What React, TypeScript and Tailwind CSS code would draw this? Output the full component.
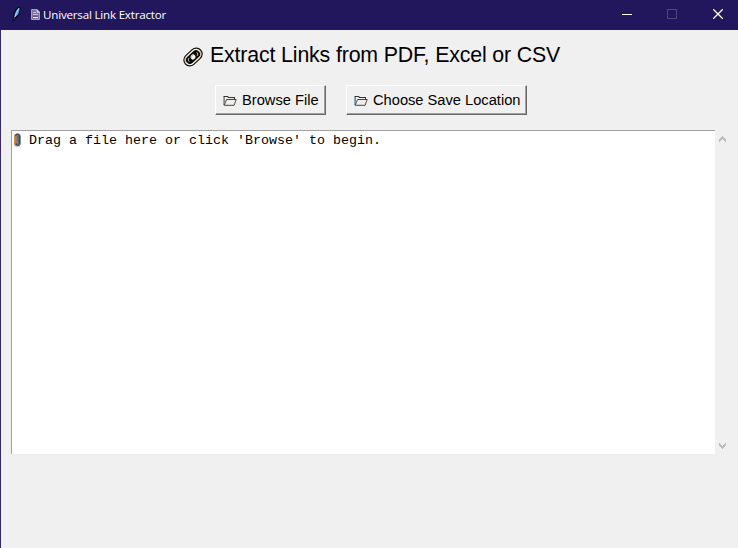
function FeatherIcon() {
  return (
    <svg className="h-4 w-3" viewBox="0 0 12 16" fill="none">
      <path d="M2 14.5 2.2 8 5 2.6 8.2.6 9.6 1.4 9.4 5 8 9.5 4.8 12.6Z" fill="#070914" />
      <path d="M3.8 11.2 3.6 8 5.6 4 8.5 1.5 8.4 4.8 7 8.8Z" fill="#4d9ce0" />
      <path d="M2.6 13.5 4.8 8.5 7.8 2.4" stroke="#c5e2f5" strokeWidth=".9" />
      <path d="M1.8 15.8 3.4 11.2" stroke="#05060c" strokeWidth="1.1" />
    </svg>
  );
}

function PageIcon() {
  return (
    <svg className="h-[11px] w-[9px]" viewBox="0 0 9 11" fill="none">
      <path d="M.5.5h5.5l2.5 2.5v7.5h-8Z" fill="#7d739d" stroke="#a79fbd" />
      <path d="M6 .5v2.7h2.5" fill="#d6d2e6" stroke="#d6d2e6" strokeWidth=".8" />
      <path d="M2 3.5h3M2 5.5h5" stroke="#c4bdd6" />
      <path d="M2 8.5h5" stroke="#f0edf8" />
      <path d="M2 7.2h5" stroke="#4b3d82" strokeWidth=".8" />
    </svg>
  );
}

function LinkIcon() {
  return (
    <svg className="h-5 w-5" viewBox="0 0 20 20" fill="none">
      <g transform="rotate(-43 10 10)">
        <rect x="-.3" y="4.1" width="20.6" height="11.8" rx="5.9" fill="#f6eee2" stroke="#111" strokeWidth="1.2" />
        <rect x="1.8" y="6" width="16.4" height="8" rx="4" fill="#0a0a0a" />
        <path d="M4 10.8c0-1.8 1-2.5 2.3-2.7M16 9.2c0 1.8-1 2.5-2.3 2.7" stroke="#d6e8f5" strokeWidth=".9" />
        <circle cx="10" cy="10" r="3" fill="#f7f5ed" stroke="#111" strokeWidth="1" />
        <path d="M8.3 9.5c.5-1.2 1.8-1.4 2.8-.8" stroke="#7baed6" strokeWidth=".7" />
        <path d="M1.2 9.2C1.5 6.7 3.2 5.3 5.6 5.3M18.8 10.8c-.3 2.5-2 3.9-4.4 3.9" stroke="#d79a52" strokeWidth=".6" />
      </g>
    </svg>
  );
}

function FolderIcon() {
  return (
    <svg className="h-[11px] w-[14px] shrink-0" viewBox="0 0 14 11" fill="none">
      <path d="M1 10V1.5h3.5L5.5 2.5h6v2" stroke="#373432" strokeWidth="1.1" />
      <path d="M1.3 10.3 3.5 4.5h9.7l-2.1 5.8Z" fill="#f0f0f0" stroke="#474341" />
      <path d="M.4 2v7.5" stroke="#89bce4" strokeWidth=".8" />
      <path d="m3 6-1.2 3M12.5 5.5l-1.6 4" stroke="#c99a74" strokeWidth=".5" />
    </svg>
  );
}

function ClipIcon() {
  return (
    <svg className="h-[14px] w-[7px]" viewBox="0 0 7 14" fill="none">
      <rect x=".3" y=".4" width="6.2" height="13.2" rx="2.4" fill="#8d8480" />
      <path d="M.6 2.5v9" stroke="#dc9341" strokeWidth="1.2" />
      <path d="M6.3 2.5v9" stroke="#6689ad" strokeWidth="1.1" />
      <path d="M1.8 3C1.8.4 5.2.4 5.2 3v7.2c0 2.8-3 2.8-3 .2" stroke="#302b2b" />
      <path d="M3.5 3v6" stroke="#806c60" />
    </svg>
  );
}

function ScrollArrow({ down = false }: { down?: boolean }) {
  return (
    <svg className={down ? "h-[6px] w-[7px] rotate-180" : "h-[6px] w-[7px]"} viewBox="0 0 7 6" fill="#bcbcbc" shapeRendering="crispEdges">
      <path d="M3 0h1v1h1v1h1v1h1v3H6V5H5V4H4V3H3v1H2v1H1v1H0V3h1V2h1V1h1Z" />
    </svg>
  );
}

function FileButton({ label, className }: { label: string; className: string }) {
  return (
    <button className={`${className} flex h-[30px] items-center border border-t-white border-r-[#696969] border-b-[#696969] border-l-white bg-[#f0f0f0] pl-[7px] text-black shadow-[inset_-1px_-1px_#a0a0a0]`}>
      <span className="mt-px flex"><FolderIcon /></span>
      <span className="ml-[5px] whitespace-nowrap text-[14.67px] leading-[20px]">{label}</span>
    </button>
  );
}

export default function App() {
  return (
    <div className="flex h-[548px] w-[738px] flex-col overflow-hidden bg-[#f0f0f0] font-['Liberation_Sans',Arial,sans-serif] text-black">
      <header className="flex h-[30px] shrink-0 bg-[#22165d] text-white">
        <div className="flex items-start pl-[11px] pt-[6px]">
          <FeatherIcon />
          <span className="ml-[8px] mt-[3px]"><PageIcon /></span>
          <span className="ml-[3px] whitespace-nowrap font-['Open_Sans',sans-serif] text-[11.6px] leading-[17px] tracking-[-0.2px]">Universal Link Extractor</span>
        </div>
        <div className="ml-auto flex">
          <span className="flex w-[46px] justify-center pt-[14px]"><svg className="h-px w-[10px]" viewBox="0 0 10 1"><path d="M0 0h10v1H0Z" fill="white" /></svg></span>
          <span className="flex w-[44px] justify-center pt-[9px]"><span className="h-[10px] w-[10px] border border-[#51477f]" /></span>
          <span className="flex w-[44px] justify-center pl-[4px] pt-[9px]"><svg className="h-[10px] w-[10px]" viewBox="0 0 10 10"><path d="m.3.3 9.4 9.4m0-9.4L.3 9.7" stroke="white" strokeWidth="1.3" /></svg></span>
        </div>
      </header>
      <main className="flex min-h-0 flex-1 flex-col border-l border-[#37296f]">
        <div className="flex h-[55px] shrink-0 pl-[182px] pt-[13px]">
          <span className="mt-[4px]"><LinkIcon /></span>
          <h1 className="ml-[7px] whitespace-nowrap text-[21.33px] leading-[25px] tracking-[-0.15px]">Extract Links from PDF, Excel or CSV</h1>
        </div>
        <div className="flex h-[45px] shrink-0 gap-[20px] pl-[214px]">
          <FileButton label="Browse File" className="w-[111px]" />
          <FileButton label="Choose Save Location" className="w-[181px]" />
        </div>
        <div className="flex h-[324px] pl-[10px]">
          <div className="flex w-[704px] items-start border-t border-l border-[#a0a0a0] bg-white pl-[2px] pt-[2px]">
            <ClipIcon />
            <pre className="ml-[8px] font-['Liberation_Mono','Courier_New',monospace] text-[13.33px] leading-[15px]">Drag a file here or click 'Browse' to begin.</pre>
          </div>
          <div className="flex w-[15px] flex-col items-center justify-between pt-[6px] pb-[5px]">
            <ScrollArrow />
            <ScrollArrow down />
          </div>
        </div>
      </main>
    </div>
  );
}
